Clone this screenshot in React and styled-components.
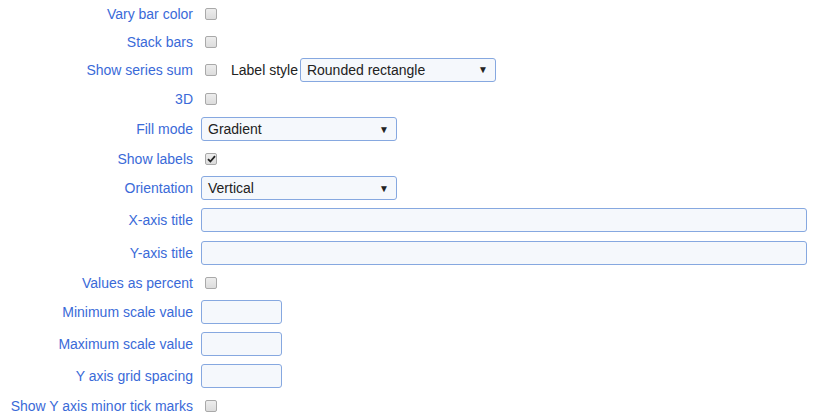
import React from "react"
import styled, { createGlobalStyle } from "styled-components"

const Global = createGlobalStyle`
    body {
        margin: 0;
        background: #ffffff;
        font-family: "Liberation Sans", Arial, sans-serif;
    }
`

const Form = styled.div`
    width: 821px;
    display: flex;
    flex-direction: column;
`

const Row = styled.div`
    display: grid;
    grid-template-columns: 193px 1fr;
    column-gap: 8px;
    align-items: center;
    height: ${props => props.h}px;
`

const Label = styled.div`
    text-align: right;
    font-size: 14px;
    color: #3a6ad8;
    white-space: nowrap;
`

const Control = styled.div`
    display: flex;
    align-items: center;
    padding-right: 14px;
`

const Box = styled.span`
    box-sizing: border-box;
    width: 12px;
    height: 12px;
    margin-left: 4px;
    border: 1px solid #a9a9a9;
    border-radius: 2px;
    background: linear-gradient(#ededed, #dcdcdc);
    display: flex;
    align-items: center;
    justify-content: center;
`

const Inline = styled.span`
    font-size: 14px;
    color: #222222;
    margin-left: 14px;
    margin-right: 2px;
`

const Select = styled.div`
    box-sizing: border-box;
    width: ${props => props.w}px;
    height: 24px;
    border: 1px solid #86a8e0;
    border-radius: 3px;
    background: #f5f8fc;
    display: flex;
    align-items: center;
    justify-content: space-between;
    padding: 0 7px 0 6px;
    font-size: 14px;
    color: #222222;
`

const Arrow = styled.span`
    font-size: 10px;
    color: #222222;
`

const Input = styled.div`
    box-sizing: border-box;
    width: ${props => props.w ? `${props.w}px` : "100%"};
    height: 24px;
    border: 1px solid #86a8e0;
    border-radius: 3px;
    background: #f5f8fc;
`

const Check = ({checked}) => (
    <Box>
        {checked && (
            <svg width="9" height="8" viewBox="0 0 9 8">
                <path d="M1 4.2 L3.4 6.5 L8 1.2" fill="none" stroke="#222" strokeWidth="1.8"/>
            </svg>
        )}
    </Box>
)

const Dropdown = ({w, value}) => (
    <Select w={w}>
        <span>{value}</span>
        <Arrow>▼</Arrow>
    </Select>
)

const rows = [
    {label: "Vary bar color", h: 28, kind: "check"},
    {label: "Stack bars", h: 27, kind: "check"},
    {label: "Show series sum", h: 29, kind: "sum"},
    {label: "3D", h: 30, kind: "check"},
    {label: "Fill mode", h: 30, kind: "select", value: "Gradient"},
    {label: "Show labels", h: 29, kind: "check", checked: true},
    {label: "Orientation", h: 30, kind: "select", value: "Vertical"},
    {label: "X-axis title", h: 34, kind: "wide"},
    {label: "Y-axis title", h: 32, kind: "wide"},
    {label: "Values as percent", h: 27, kind: "check"},
    {label: "Minimum scale value", h: 32, kind: "small"},
    {label: "Maximum scale value", h: 32, kind: "small"},
    {label: "Y axis grid spacing", h: 32, kind: "small"},
    {label: "Show Y axis minor tick marks", h: 27, kind: "check"},
]

const renderControl = (row) => {
    switch (row.kind) {
        case "sum":
            return (
                <>
                    <Check />
                    <Inline>Label style</Inline>
                    <Dropdown w={196} value="Rounded rectangle" />
                </>
            )
        case "select":
            return <Dropdown w={196} value={row.value} />
        case "wide":
            return <Input />
        case "small":
            return <Input w={81} />
        default:
            return <Check checked={row.checked} />
    }
}

const App = () => (
    <>
        <Global />
        <Form>
            {rows.map((row, index) => (
                <Row h={row.h} key={index}>
                    <Label>{row.label}</Label>
                    <Control>{renderControl(row)}</Control>
                </Row>
            ))}
        </Form>
    </>
)

export default App
